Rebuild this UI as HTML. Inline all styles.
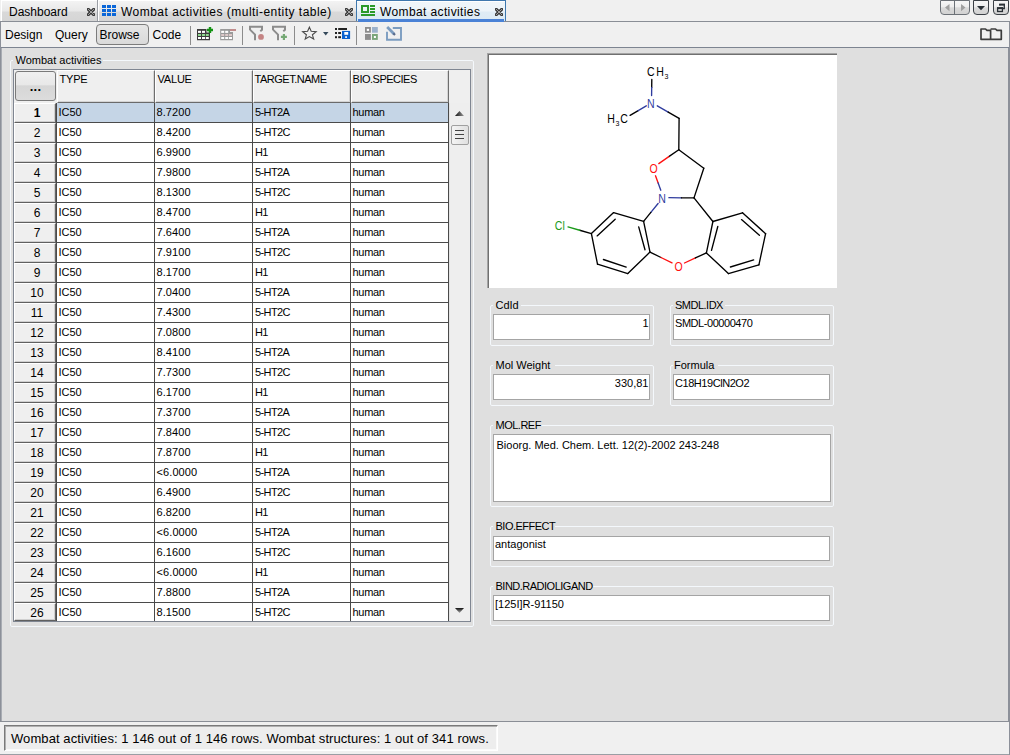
<!DOCTYPE html>
<html><head><meta charset="utf-8"><style>
*{margin:0;padding:0;box-sizing:border-box}
html,body{width:1010px;height:755px;overflow:hidden;background:#dfdfdf;font-family:"Liberation Sans",sans-serif;color:#000}
.a{position:absolute}
.t{position:absolute;white-space:pre;line-height:1}
</style></head>
<body>
<div class="a" style="left:0px;top:0px;width:1010px;height:21px;background:#f0f0f0"></div>
<div class="a" style="left:0px;top:21px;width:1010px;height:1px;background:#8a8e96"></div>
<div class="a" style="left:1px;top:0px;width:96px;height:21px;background:linear-gradient(#f3f3f3 0,#e8e8e8 50%,#d9d9d9 55%,#d5d5d5 100%);border-left:1px solid #fff;border-top:1px solid #fff"></div>
<div class="a" style="left:97px;top:0px;width:1px;height:21px;background:#9a9ea4"></div>
<div class="t" style="left:9px;top:6.34px;font-size:12px;">Dashboard</div>
<svg class="a" style="left:87px;top:8px" width="8" height="8" viewBox="0 0 8 8"><path d="M1.3 1.3L6.7 6.7M6.7 1.3L1.3 6.7" stroke="#3a3a3a" stroke-width="3.1" stroke-linecap="round"/><path d="M1.3 1.3L6.7 6.7M6.7 1.3L1.3 6.7" stroke="#d0d0d0" stroke-width="0.7" stroke-linecap="round"/></svg>
<div class="a" style="left:98px;top:0px;width:258px;height:21px;background:linear-gradient(#f3f3f3 0,#e8e8e8 50%,#d9d9d9 55%,#d5d5d5 100%);border-left:1px solid #fff;border-top:1px solid #fff"></div>
<div class="a" style="left:102px;top:5px;width:4px;height:3px;background:#0a66d8"></div>
<div class="a" style="left:107px;top:5px;width:4px;height:3px;background:#0a66d8"></div>
<div class="a" style="left:112px;top:5px;width:4px;height:3px;background:#0a66d8"></div>
<div class="a" style="left:102px;top:9px;width:4px;height:3px;background:#0a66d8"></div>
<div class="a" style="left:107px;top:9px;width:4px;height:3px;background:#0a66d8"></div>
<div class="a" style="left:112px;top:9px;width:4px;height:3px;background:#0a66d8"></div>
<div class="a" style="left:102px;top:13px;width:4px;height:3px;background:#0a66d8"></div>
<div class="a" style="left:107px;top:13px;width:4px;height:3px;background:#0a66d8"></div>
<div class="a" style="left:112px;top:13px;width:4px;height:3px;background:#0a66d8"></div>
<div class="t" style="left:121px;top:6.34px;font-size:12px;letter-spacing:0.48px">Wombat activities (multi-entity table)</div>
<svg class="a" style="left:345px;top:8px" width="8" height="8" viewBox="0 0 8 8"><path d="M1.3 1.3L6.7 6.7M6.7 1.3L1.3 6.7" stroke="#3a3a3a" stroke-width="3.1" stroke-linecap="round"/><path d="M1.3 1.3L6.7 6.7M6.7 1.3L1.3 6.7" stroke="#d0d0d0" stroke-width="0.7" stroke-linecap="round"/></svg>
<div class="a" style="left:356px;top:0px;width:150px;height:21px;background:linear-gradient(#f0f6fa 0,#edf4f9 50%,#dfecf5 55%,#dceaf4 100%);border:1px solid #3f78ae;border-bottom:none"></div>
<div class="a" style="left:357px;top:1px;width:148px;height:1px;background:#fff"></div>
<div class="a" style="left:358px;top:19px;width:146px;height:3px;background:#4a82d6"></div>
<div class="a" style="left:361px;top:5px;width:8px;height:8px;border:2px solid #2a9a2a"></div>
<div class="a" style="left:370px;top:5px;width:5px;height:2px;background:#2a9a2a"></div>
<div class="a" style="left:370px;top:8px;width:5px;height:2px;background:#2a9a2a"></div>
<div class="a" style="left:370px;top:11px;width:5px;height:2px;background:#2a9a2a"></div>
<div class="a" style="left:361px;top:14px;width:14px;height:2px;background:#2a9a2a"></div>
<div class="t" style="left:380px;top:6.34px;font-size:12px;letter-spacing:0.38px">Wombat activities</div>
<svg class="a" style="left:495px;top:8px" width="8" height="8" viewBox="0 0 8 8"><path d="M1.3 1.3L6.7 6.7M6.7 1.3L1.3 6.7" stroke="#3a3a3a" stroke-width="3.1" stroke-linecap="round"/><path d="M1.3 1.3L6.7 6.7M6.7 1.3L1.3 6.7" stroke="#d0d0d0" stroke-width="0.7" stroke-linecap="round"/></svg>
<div class="a" style="left:940px;top:0px;width:30px;height:15px;background:linear-gradient(#f6f6f6 0,#eeeeee 45%,#dadada 52%,#d2d2d2 100%);border:1px solid #6c7177;border-radius:0 0 4px 4px"></div>
<div class="a" style="left:954px;top:1px;width:1px;height:13px;background:#6c7177"></div>
<svg class="a" style="left:944px;top:4px" width="22" height="8"><path d="M5.5 0L1 3.6L5.5 7.2Z M17 0L21.5 3.6L17 7.2Z" fill="#a0a0a0"/></svg>
<div class="a" style="left:973px;top:0px;width:16px;height:15px;background:linear-gradient(#f6f6f6 0,#eeeeee 45%,#dadada 52%,#d2d2d2 100%);border:1px solid #3a3f45;border-radius:0 0 4px 4px"></div>
<svg class="a" style="left:977px;top:6px" width="9" height="5"><path d="M0 0L8 0L4 4.2Z" fill="#2a3036"/></svg>
<div class="a" style="left:993px;top:0px;width:16px;height:15px;background:linear-gradient(#f6f6f6 0,#eeeeee 45%,#dadada 52%,#d2d2d2 100%);border:1px solid #3a3f45;border-radius:0 0 4px 4px"></div>
<svg class="a" style="left:996px;top:3px" width="10" height="10" viewBox="996 3 10 10"><path d="M999.8 5.5V4.5H1004.3V8.5H1002.6" fill="none" stroke="#2a3036" stroke-width="1.3"/><rect x="999.2" y="3.8" width="5.8" height="1.7" fill="#2a3036"/><rect x="997.6" y="7.9" width="4.8" height="3.6" fill="none" stroke="#2a3036" stroke-width="1.3"/><rect x="997" y="7.3" width="6" height="1.8" fill="#2a3036"/></svg>
<div class="a" style="left:0px;top:22px;width:1010px;height:25px;background:#f0f0f0"></div>
<div class="a" style="left:0px;top:47px;width:1010px;height:1px;background:#7d8491"></div>
<div class="t" style="left:5px;top:28.54px;font-size:12px;">Design</div>
<div class="t" style="left:55px;top:28.54px;font-size:12px;">Query</div>
<div class="a" style="left:96px;top:24px;width:53px;height:21px;background:linear-gradient(#e6e6e6,#e0e0e0 50%,#dadada 100%);border:1px solid #7c7c7c;border-radius:4px"></div>
<div class="t" style="left:99.5px;top:28.54px;font-size:12px;">Browse</div>
<div class="t" style="left:152.5px;top:28.54px;font-size:12px;">Code</div>
<div class="a" style="left:190px;top:26px;width:1px;height:19px;background:#8c8c8c"></div>
<div class="a" style="left:242px;top:26px;width:1px;height:19px;background:#8c8c8c"></div>
<div class="a" style="left:294px;top:26px;width:1px;height:19px;background:#8c8c8c"></div>
<div class="a" style="left:356px;top:26px;width:1px;height:19px;background:#8c8c8c"></div>
<svg class="a" style="left:196px;top:26px" width="18" height="15" viewBox="196 26 18 15"><path d="M197 29H206.5V32.5H210V40.2H197Z" fill="#3c3c3c"/><rect x="198" y="30.8" width="3" height="2.1" fill="#fff"/><rect x="202" y="30.8" width="3" height="2.1" fill="#fff"/><rect x="198" y="34" width="3" height="2" fill="#8ed88e"/><rect x="202" y="34" width="3" height="2" fill="#8ed88e"/><rect x="205.8" y="34" width="3" height="2" fill="#8ed88e"/><rect x="198" y="37" width="3" height="2" fill="#fff"/><rect x="202" y="37" width="3" height="2" fill="#fff"/><rect x="205.8" y="37" width="3" height="2" fill="#fff"/><path d="M210 27V33M207 30H213" stroke="#139313" stroke-width="2.4"/></svg>
<svg class="a" style="left:219px;top:26px" width="18" height="15" viewBox="219 26 18 15"><path d="M220.2 29H230V32H233V40.2H220.2Z" fill="#9a9a9a"/><rect x="221.2" y="30.8" width="3" height="2.1" fill="#fff"/><rect x="225.2" y="30.8" width="3" height="2.1" fill="#fff"/><rect x="221.2" y="34" width="3" height="2" fill="#dcc8c8"/><rect x="225.2" y="34" width="3" height="2" fill="#dcc8c8"/><rect x="229" y="34" width="3" height="2" fill="#dcc8c8"/><rect x="221.2" y="37" width="3" height="2" fill="#fff"/><rect x="225.2" y="37" width="3" height="2" fill="#fff"/><rect x="229" y="37" width="3" height="2" fill="#fff"/><rect x="230" y="29" width="6" height="2" fill="#c08c8c"/></svg>
<svg class="a" style="left:248px;top:25px" width="40" height="16"><g fill="none" stroke="#8c8c8c" stroke-width="2"><path d="M2 5V1.8H14V4.8L12.3 6.2M2 4.6L7 9.6V15.2"/><path transform="translate(23,0)" d="M2 5V1.8H14V4.8L12.3 6.2M2 4.6L7 9.6V15.2"/></g><circle cx="13" cy="11.9" r="2.9" fill="#c48484"/><path d="M35.9 9V15M32.9 11.9H38.9" stroke="#74a874" stroke-width="2.2"/></svg>
<svg class="a" style="left:300px;top:25px" width="18" height="16" viewBox="300 25 18 16"><path d="M309.4 27.2L311.2 31.2L316.2 31.6L312.4 34.8L313.7 39L309.4 36.6L305.2 39L306.4 34.8L302.6 31.6L307.6 31.2Z" fill="none" stroke="#4a4a4a" stroke-width="1.1" stroke-linejoin="miter"/></svg>
<svg class="a" style="left:323px;top:32px" width="6" height="4"><path d="M0 0H5.5L2.75 3.6Z" fill="#34495a"/></svg>
<svg class="a" style="left:334px;top:27px" width="18" height="13" viewBox="334 27 18 13"><rect x="335" y="28" width="2" height="2" fill="#222"/><rect x="338.2" y="28" width="8.8" height="2" fill="#222"/><rect x="335" y="32" width="2" height="2" fill="#222"/><rect x="338.2" y="32" width="2.8" height="2" fill="#222"/><rect x="335" y="36.2" width="2" height="2" fill="#222"/><rect x="338.2" y="36.2" width="2.8" height="2" fill="#222"/><rect x="342" y="30.9" width="8.1" height="8.1" fill="#0a62d0"/><rect x="344.3" y="32" width="3.9" height="2.8" fill="#fff"/><rect x="345.1" y="36.3" width="1.9" height="1.6" fill="#fff"/></svg>
<svg class="a" style="left:364px;top:26px" width="15" height="15" viewBox="364 26 15 15"><rect x="365.9" y="27.9" width="4.1" height="3.9" fill="#fff" stroke="#8c8c8c" stroke-width="1.8"/><rect x="372" y="27" width="5.8" height="5.7" fill="#9cb2cc"/><rect x="365" y="34" width="5.9" height="5.9" fill="#8e8e8e"/><rect x="372" y="34" width="5.8" height="5.9" fill="#7aa67a"/><rect x="373.9" y="36" width="2" height="2" fill="#fff"/></svg>
<svg class="a" style="left:385px;top:25px" width="18" height="17" viewBox="385 25 18 17"><path d="M392.8 28H401V39.7H387V31.7" fill="none" stroke="#7b9cc0" stroke-width="1.9"/><path d="M387.2 27L394.3 34.2" stroke="#7b9cc0" stroke-width="2.8"/><path d="M393.3 33.2L395 35" stroke="#5a6a8a" stroke-width="2"/></svg>
<svg class="a" style="left:978px;top:26px" width="26" height="16" viewBox="978 26 26 16"><path d="M981 29H985.5L987 30.4H990.6V39.3H981Z M990.6 29H995.5L997 30.4H1001.3V39.3H990.6" fill="none" stroke="#3c3c3c" stroke-width="1.7" stroke-linejoin="round"/></svg>
<div class="a" style="left:0px;top:22px;width:1px;height:700px;background:#8c9099"></div>
<div class="a" style="left:1px;top:48px;width:1px;height:674px;background:#a8acb3"></div>
<div class="a" style="left:1009px;top:22px;width:1px;height:733px;background:#8c9099"></div>
<div class="a" style="left:1008px;top:48px;width:1px;height:674px;background:#8c9099"></div>
<div class="a" style="left:0px;top:721px;width:1010px;height:1px;background:#8a8e96"></div>
<div class="a" style="left:0px;top:722px;width:1010px;height:33px;background:#f0f0f0"></div>
<div class="a" style="left:0px;top:754px;width:1010px;height:1px;background:#9a9ea4"></div>
<div class="a" style="left:1009px;top:722px;width:1px;height:33px;background:#8c9099"></div>
<div class="a" style="left:4px;top:725px;width:494px;height:26px;border-top:1px solid #7a7a7a;border-left:1px solid #7a7a7a;border-bottom:1px solid #fff;border-right:1px solid #fff;background:#ededed;box-shadow:inset 1px 1px 0 #b0b0b0,inset -1px -1px 0 #fafafa"></div>
<div class="t" style="left:11px;top:731.80px;font-size:13px;letter-spacing:0.08px">Wombat activities: 1 146 out of 1 146 rows. Wombat structures: 1 out of 341 rows.</div>
<div class="a" style="left:10px;top:60px;width:464px;height:567px;border:1px solid #f4f8fc;border-radius:2px"></div>
<div class="a" style="left:13px;top:57px;width:90px;height:8px;background:#dfdfdf"></div>
<div class="t" style="left:15.5px;top:54.69px;font-size:11px;">Wombat activities</div>
<div class="a" style="left:13px;top:69px;width:458px;height:553px;background:#fff;border:1px solid #7f8692"></div>
<div class="a" style="left:14px;top:70px;width:456px;height:33px;background:#efefef"></div>
<div class="a" style="left:15px;top:71px;width:41px;height:30px;background:linear-gradient(#f0f0f0 0,#e8e8e8 45%,#d6d6d6 50%,#dcdcdc 100%);border:1px solid #7a7a7a;border-radius:3px"></div>
<div class="t" style="left:-14.5px;width:100px;text-align:center;top:79.50px;font-size:13px;font-weight:bold;letter-spacing:0.3px">...</div>
<div class="a" style="left:57px;top:70px;width:98px;height:33px;background:#efefef;border-left:1px solid #fff;border-top:1px solid #fff;border-right:1px solid #6e6e6e;border-bottom:1px solid #6a6a6a;box-shadow:inset -1px -1px 0 #d4d4d4"></div>
<div class="t" style="left:59.5px;top:74.19px;font-size:11px;letter-spacing:-0.2px">TYPE</div>
<div class="a" style="left:155px;top:70px;width:98px;height:33px;background:#efefef;border-left:1px solid #fff;border-top:1px solid #fff;border-right:1px solid #6e6e6e;border-bottom:1px solid #6a6a6a;box-shadow:inset -1px -1px 0 #d4d4d4"></div>
<div class="t" style="left:157.5px;top:74.19px;font-size:11px;letter-spacing:-0.2px">VALUE</div>
<div class="a" style="left:253px;top:70px;width:98px;height:33px;background:#efefef;border-left:1px solid #fff;border-top:1px solid #fff;border-right:1px solid #6e6e6e;border-bottom:1px solid #6a6a6a;box-shadow:inset -1px -1px 0 #d4d4d4"></div>
<div class="t" style="left:254.6px;top:74.19px;font-size:11px;letter-spacing:-0.5px">TARGET.NAME</div>
<div class="a" style="left:351px;top:70px;width:98px;height:33px;background:#efefef;border-left:1px solid #fff;border-top:1px solid #fff;border-right:1px solid #6e6e6e;border-bottom:1px solid #6a6a6a;box-shadow:inset -1px -1px 0 #d4d4d4"></div>
<div class="t" style="left:352.6px;top:74.19px;font-size:11px;letter-spacing:-0.5px">BIO.SPECIES</div>
<div class="a" style="left:14px;top:103px;width:42px;height:20px;background:#efefef;border-left:1px solid #fff;border-top:1px solid #fff;border-right:1px solid #666;border-bottom:1px solid #606060;box-shadow:inset -1px -1px 0 #cfcfcf"></div>
<div class="t" style="left:-13px;width:100px;text-align:center;top:106.64px;font-size:12px;font-weight:bold">1</div>
<div class="a" style="left:56px;top:103px;width:392px;height:20px;background:#c5d5e6"></div>
<div class="a" style="left:56px;top:122px;width:392px;height:1px;background:#4a4a4a"></div>
<div class="a" style="left:56px;top:103px;width:1px;height:20px;background:#4a4a4a"></div>
<div class="a" style="left:154px;top:103px;width:1px;height:20px;background:#4a4a4a"></div>
<div class="a" style="left:252px;top:103px;width:1px;height:20px;background:#4a4a4a"></div>
<div class="a" style="left:350px;top:103px;width:1px;height:20px;background:#4a4a4a"></div>
<div class="a" style="left:448px;top:103px;width:1px;height:20px;background:#4a4a4a"></div>
<div class="t" style="left:58.5px;top:106.69px;font-size:11px;">IC50</div>
<div class="t" style="left:156.5px;top:106.69px;font-size:11px;letter-spacing:0.1px">8.7200</div>
<div class="t" style="left:255px;top:106.69px;font-size:11px;letter-spacing:-0.6px">5-HT2A</div>
<div class="t" style="left:352.5px;top:106.69px;font-size:11px;letter-spacing:-0.3px">human</div>
<div class="a" style="left:14px;top:123px;width:42px;height:20px;background:#efefef;border-left:1px solid #fff;border-top:1px solid #fff;border-right:1px solid #666;border-bottom:1px solid #606060;box-shadow:inset -1px -1px 0 #cfcfcf"></div>
<div class="t" style="left:-13px;width:100px;text-align:center;top:126.64px;font-size:12px;">2</div>
<div class="a" style="left:56px;top:123px;width:392px;height:20px;background:#fff"></div>
<div class="a" style="left:56px;top:142px;width:392px;height:1px;background:#4a4a4a"></div>
<div class="a" style="left:56px;top:123px;width:1px;height:20px;background:#4a4a4a"></div>
<div class="a" style="left:154px;top:123px;width:1px;height:20px;background:#4a4a4a"></div>
<div class="a" style="left:252px;top:123px;width:1px;height:20px;background:#4a4a4a"></div>
<div class="a" style="left:350px;top:123px;width:1px;height:20px;background:#4a4a4a"></div>
<div class="a" style="left:448px;top:123px;width:1px;height:20px;background:#4a4a4a"></div>
<div class="t" style="left:58.5px;top:126.69px;font-size:11px;">IC50</div>
<div class="t" style="left:156.5px;top:126.69px;font-size:11px;letter-spacing:0.1px">8.4200</div>
<div class="t" style="left:255px;top:126.69px;font-size:11px;letter-spacing:-0.6px">5-HT2C</div>
<div class="t" style="left:352.5px;top:126.69px;font-size:11px;letter-spacing:-0.3px">human</div>
<div class="a" style="left:14px;top:143px;width:42px;height:20px;background:#efefef;border-left:1px solid #fff;border-top:1px solid #fff;border-right:1px solid #666;border-bottom:1px solid #606060;box-shadow:inset -1px -1px 0 #cfcfcf"></div>
<div class="t" style="left:-13px;width:100px;text-align:center;top:146.64px;font-size:12px;">3</div>
<div class="a" style="left:56px;top:143px;width:392px;height:20px;background:#fff"></div>
<div class="a" style="left:56px;top:162px;width:392px;height:1px;background:#4a4a4a"></div>
<div class="a" style="left:56px;top:143px;width:1px;height:20px;background:#4a4a4a"></div>
<div class="a" style="left:154px;top:143px;width:1px;height:20px;background:#4a4a4a"></div>
<div class="a" style="left:252px;top:143px;width:1px;height:20px;background:#4a4a4a"></div>
<div class="a" style="left:350px;top:143px;width:1px;height:20px;background:#4a4a4a"></div>
<div class="a" style="left:448px;top:143px;width:1px;height:20px;background:#4a4a4a"></div>
<div class="t" style="left:58.5px;top:146.69px;font-size:11px;">IC50</div>
<div class="t" style="left:156.5px;top:146.69px;font-size:11px;letter-spacing:0.1px">6.9900</div>
<div class="t" style="left:255px;top:146.69px;font-size:11px;letter-spacing:-0.6px">H1</div>
<div class="t" style="left:352.5px;top:146.69px;font-size:11px;letter-spacing:-0.3px">human</div>
<div class="a" style="left:14px;top:163px;width:42px;height:20px;background:#efefef;border-left:1px solid #fff;border-top:1px solid #fff;border-right:1px solid #666;border-bottom:1px solid #606060;box-shadow:inset -1px -1px 0 #cfcfcf"></div>
<div class="t" style="left:-13px;width:100px;text-align:center;top:166.64px;font-size:12px;">4</div>
<div class="a" style="left:56px;top:163px;width:392px;height:20px;background:#fff"></div>
<div class="a" style="left:56px;top:182px;width:392px;height:1px;background:#4a4a4a"></div>
<div class="a" style="left:56px;top:163px;width:1px;height:20px;background:#4a4a4a"></div>
<div class="a" style="left:154px;top:163px;width:1px;height:20px;background:#4a4a4a"></div>
<div class="a" style="left:252px;top:163px;width:1px;height:20px;background:#4a4a4a"></div>
<div class="a" style="left:350px;top:163px;width:1px;height:20px;background:#4a4a4a"></div>
<div class="a" style="left:448px;top:163px;width:1px;height:20px;background:#4a4a4a"></div>
<div class="t" style="left:58.5px;top:166.69px;font-size:11px;">IC50</div>
<div class="t" style="left:156.5px;top:166.69px;font-size:11px;letter-spacing:0.1px">7.9800</div>
<div class="t" style="left:255px;top:166.69px;font-size:11px;letter-spacing:-0.6px">5-HT2A</div>
<div class="t" style="left:352.5px;top:166.69px;font-size:11px;letter-spacing:-0.3px">human</div>
<div class="a" style="left:14px;top:183px;width:42px;height:20px;background:#efefef;border-left:1px solid #fff;border-top:1px solid #fff;border-right:1px solid #666;border-bottom:1px solid #606060;box-shadow:inset -1px -1px 0 #cfcfcf"></div>
<div class="t" style="left:-13px;width:100px;text-align:center;top:186.64px;font-size:12px;">5</div>
<div class="a" style="left:56px;top:183px;width:392px;height:20px;background:#fff"></div>
<div class="a" style="left:56px;top:202px;width:392px;height:1px;background:#4a4a4a"></div>
<div class="a" style="left:56px;top:183px;width:1px;height:20px;background:#4a4a4a"></div>
<div class="a" style="left:154px;top:183px;width:1px;height:20px;background:#4a4a4a"></div>
<div class="a" style="left:252px;top:183px;width:1px;height:20px;background:#4a4a4a"></div>
<div class="a" style="left:350px;top:183px;width:1px;height:20px;background:#4a4a4a"></div>
<div class="a" style="left:448px;top:183px;width:1px;height:20px;background:#4a4a4a"></div>
<div class="t" style="left:58.5px;top:186.69px;font-size:11px;">IC50</div>
<div class="t" style="left:156.5px;top:186.69px;font-size:11px;letter-spacing:0.1px">8.1300</div>
<div class="t" style="left:255px;top:186.69px;font-size:11px;letter-spacing:-0.6px">5-HT2C</div>
<div class="t" style="left:352.5px;top:186.69px;font-size:11px;letter-spacing:-0.3px">human</div>
<div class="a" style="left:14px;top:203px;width:42px;height:20px;background:#efefef;border-left:1px solid #fff;border-top:1px solid #fff;border-right:1px solid #666;border-bottom:1px solid #606060;box-shadow:inset -1px -1px 0 #cfcfcf"></div>
<div class="t" style="left:-13px;width:100px;text-align:center;top:206.64px;font-size:12px;">6</div>
<div class="a" style="left:56px;top:203px;width:392px;height:20px;background:#fff"></div>
<div class="a" style="left:56px;top:222px;width:392px;height:1px;background:#4a4a4a"></div>
<div class="a" style="left:56px;top:203px;width:1px;height:20px;background:#4a4a4a"></div>
<div class="a" style="left:154px;top:203px;width:1px;height:20px;background:#4a4a4a"></div>
<div class="a" style="left:252px;top:203px;width:1px;height:20px;background:#4a4a4a"></div>
<div class="a" style="left:350px;top:203px;width:1px;height:20px;background:#4a4a4a"></div>
<div class="a" style="left:448px;top:203px;width:1px;height:20px;background:#4a4a4a"></div>
<div class="t" style="left:58.5px;top:206.69px;font-size:11px;">IC50</div>
<div class="t" style="left:156.5px;top:206.69px;font-size:11px;letter-spacing:0.1px">8.4700</div>
<div class="t" style="left:255px;top:206.69px;font-size:11px;letter-spacing:-0.6px">H1</div>
<div class="t" style="left:352.5px;top:206.69px;font-size:11px;letter-spacing:-0.3px">human</div>
<div class="a" style="left:14px;top:223px;width:42px;height:20px;background:#efefef;border-left:1px solid #fff;border-top:1px solid #fff;border-right:1px solid #666;border-bottom:1px solid #606060;box-shadow:inset -1px -1px 0 #cfcfcf"></div>
<div class="t" style="left:-13px;width:100px;text-align:center;top:226.64px;font-size:12px;">7</div>
<div class="a" style="left:56px;top:223px;width:392px;height:20px;background:#fff"></div>
<div class="a" style="left:56px;top:242px;width:392px;height:1px;background:#4a4a4a"></div>
<div class="a" style="left:56px;top:223px;width:1px;height:20px;background:#4a4a4a"></div>
<div class="a" style="left:154px;top:223px;width:1px;height:20px;background:#4a4a4a"></div>
<div class="a" style="left:252px;top:223px;width:1px;height:20px;background:#4a4a4a"></div>
<div class="a" style="left:350px;top:223px;width:1px;height:20px;background:#4a4a4a"></div>
<div class="a" style="left:448px;top:223px;width:1px;height:20px;background:#4a4a4a"></div>
<div class="t" style="left:58.5px;top:226.69px;font-size:11px;">IC50</div>
<div class="t" style="left:156.5px;top:226.69px;font-size:11px;letter-spacing:0.1px">7.6400</div>
<div class="t" style="left:255px;top:226.69px;font-size:11px;letter-spacing:-0.6px">5-HT2A</div>
<div class="t" style="left:352.5px;top:226.69px;font-size:11px;letter-spacing:-0.3px">human</div>
<div class="a" style="left:14px;top:243px;width:42px;height:20px;background:#efefef;border-left:1px solid #fff;border-top:1px solid #fff;border-right:1px solid #666;border-bottom:1px solid #606060;box-shadow:inset -1px -1px 0 #cfcfcf"></div>
<div class="t" style="left:-13px;width:100px;text-align:center;top:246.64px;font-size:12px;">8</div>
<div class="a" style="left:56px;top:243px;width:392px;height:20px;background:#fff"></div>
<div class="a" style="left:56px;top:262px;width:392px;height:1px;background:#4a4a4a"></div>
<div class="a" style="left:56px;top:243px;width:1px;height:20px;background:#4a4a4a"></div>
<div class="a" style="left:154px;top:243px;width:1px;height:20px;background:#4a4a4a"></div>
<div class="a" style="left:252px;top:243px;width:1px;height:20px;background:#4a4a4a"></div>
<div class="a" style="left:350px;top:243px;width:1px;height:20px;background:#4a4a4a"></div>
<div class="a" style="left:448px;top:243px;width:1px;height:20px;background:#4a4a4a"></div>
<div class="t" style="left:58.5px;top:246.69px;font-size:11px;">IC50</div>
<div class="t" style="left:156.5px;top:246.69px;font-size:11px;letter-spacing:0.1px">7.9100</div>
<div class="t" style="left:255px;top:246.69px;font-size:11px;letter-spacing:-0.6px">5-HT2C</div>
<div class="t" style="left:352.5px;top:246.69px;font-size:11px;letter-spacing:-0.3px">human</div>
<div class="a" style="left:14px;top:263px;width:42px;height:20px;background:#efefef;border-left:1px solid #fff;border-top:1px solid #fff;border-right:1px solid #666;border-bottom:1px solid #606060;box-shadow:inset -1px -1px 0 #cfcfcf"></div>
<div class="t" style="left:-13px;width:100px;text-align:center;top:266.64px;font-size:12px;">9</div>
<div class="a" style="left:56px;top:263px;width:392px;height:20px;background:#fff"></div>
<div class="a" style="left:56px;top:282px;width:392px;height:1px;background:#4a4a4a"></div>
<div class="a" style="left:56px;top:263px;width:1px;height:20px;background:#4a4a4a"></div>
<div class="a" style="left:154px;top:263px;width:1px;height:20px;background:#4a4a4a"></div>
<div class="a" style="left:252px;top:263px;width:1px;height:20px;background:#4a4a4a"></div>
<div class="a" style="left:350px;top:263px;width:1px;height:20px;background:#4a4a4a"></div>
<div class="a" style="left:448px;top:263px;width:1px;height:20px;background:#4a4a4a"></div>
<div class="t" style="left:58.5px;top:266.69px;font-size:11px;">IC50</div>
<div class="t" style="left:156.5px;top:266.69px;font-size:11px;letter-spacing:0.1px">8.1700</div>
<div class="t" style="left:255px;top:266.69px;font-size:11px;letter-spacing:-0.6px">H1</div>
<div class="t" style="left:352.5px;top:266.69px;font-size:11px;letter-spacing:-0.3px">human</div>
<div class="a" style="left:14px;top:283px;width:42px;height:20px;background:#efefef;border-left:1px solid #fff;border-top:1px solid #fff;border-right:1px solid #666;border-bottom:1px solid #606060;box-shadow:inset -1px -1px 0 #cfcfcf"></div>
<div class="t" style="left:-13px;width:100px;text-align:center;top:286.64px;font-size:12px;">10</div>
<div class="a" style="left:56px;top:283px;width:392px;height:20px;background:#fff"></div>
<div class="a" style="left:56px;top:302px;width:392px;height:1px;background:#4a4a4a"></div>
<div class="a" style="left:56px;top:283px;width:1px;height:20px;background:#4a4a4a"></div>
<div class="a" style="left:154px;top:283px;width:1px;height:20px;background:#4a4a4a"></div>
<div class="a" style="left:252px;top:283px;width:1px;height:20px;background:#4a4a4a"></div>
<div class="a" style="left:350px;top:283px;width:1px;height:20px;background:#4a4a4a"></div>
<div class="a" style="left:448px;top:283px;width:1px;height:20px;background:#4a4a4a"></div>
<div class="t" style="left:58.5px;top:286.69px;font-size:11px;">IC50</div>
<div class="t" style="left:156.5px;top:286.69px;font-size:11px;letter-spacing:0.1px">7.0400</div>
<div class="t" style="left:255px;top:286.69px;font-size:11px;letter-spacing:-0.6px">5-HT2A</div>
<div class="t" style="left:352.5px;top:286.69px;font-size:11px;letter-spacing:-0.3px">human</div>
<div class="a" style="left:14px;top:303px;width:42px;height:20px;background:#efefef;border-left:1px solid #fff;border-top:1px solid #fff;border-right:1px solid #666;border-bottom:1px solid #606060;box-shadow:inset -1px -1px 0 #cfcfcf"></div>
<div class="t" style="left:-13px;width:100px;text-align:center;top:306.64px;font-size:12px;">11</div>
<div class="a" style="left:56px;top:303px;width:392px;height:20px;background:#fff"></div>
<div class="a" style="left:56px;top:322px;width:392px;height:1px;background:#4a4a4a"></div>
<div class="a" style="left:56px;top:303px;width:1px;height:20px;background:#4a4a4a"></div>
<div class="a" style="left:154px;top:303px;width:1px;height:20px;background:#4a4a4a"></div>
<div class="a" style="left:252px;top:303px;width:1px;height:20px;background:#4a4a4a"></div>
<div class="a" style="left:350px;top:303px;width:1px;height:20px;background:#4a4a4a"></div>
<div class="a" style="left:448px;top:303px;width:1px;height:20px;background:#4a4a4a"></div>
<div class="t" style="left:58.5px;top:306.69px;font-size:11px;">IC50</div>
<div class="t" style="left:156.5px;top:306.69px;font-size:11px;letter-spacing:0.1px">7.4300</div>
<div class="t" style="left:255px;top:306.69px;font-size:11px;letter-spacing:-0.6px">5-HT2C</div>
<div class="t" style="left:352.5px;top:306.69px;font-size:11px;letter-spacing:-0.3px">human</div>
<div class="a" style="left:14px;top:323px;width:42px;height:20px;background:#efefef;border-left:1px solid #fff;border-top:1px solid #fff;border-right:1px solid #666;border-bottom:1px solid #606060;box-shadow:inset -1px -1px 0 #cfcfcf"></div>
<div class="t" style="left:-13px;width:100px;text-align:center;top:326.64px;font-size:12px;">12</div>
<div class="a" style="left:56px;top:323px;width:392px;height:20px;background:#fff"></div>
<div class="a" style="left:56px;top:342px;width:392px;height:1px;background:#4a4a4a"></div>
<div class="a" style="left:56px;top:323px;width:1px;height:20px;background:#4a4a4a"></div>
<div class="a" style="left:154px;top:323px;width:1px;height:20px;background:#4a4a4a"></div>
<div class="a" style="left:252px;top:323px;width:1px;height:20px;background:#4a4a4a"></div>
<div class="a" style="left:350px;top:323px;width:1px;height:20px;background:#4a4a4a"></div>
<div class="a" style="left:448px;top:323px;width:1px;height:20px;background:#4a4a4a"></div>
<div class="t" style="left:58.5px;top:326.69px;font-size:11px;">IC50</div>
<div class="t" style="left:156.5px;top:326.69px;font-size:11px;letter-spacing:0.1px">7.0800</div>
<div class="t" style="left:255px;top:326.69px;font-size:11px;letter-spacing:-0.6px">H1</div>
<div class="t" style="left:352.5px;top:326.69px;font-size:11px;letter-spacing:-0.3px">human</div>
<div class="a" style="left:14px;top:343px;width:42px;height:20px;background:#efefef;border-left:1px solid #fff;border-top:1px solid #fff;border-right:1px solid #666;border-bottom:1px solid #606060;box-shadow:inset -1px -1px 0 #cfcfcf"></div>
<div class="t" style="left:-13px;width:100px;text-align:center;top:346.64px;font-size:12px;">13</div>
<div class="a" style="left:56px;top:343px;width:392px;height:20px;background:#fff"></div>
<div class="a" style="left:56px;top:362px;width:392px;height:1px;background:#4a4a4a"></div>
<div class="a" style="left:56px;top:343px;width:1px;height:20px;background:#4a4a4a"></div>
<div class="a" style="left:154px;top:343px;width:1px;height:20px;background:#4a4a4a"></div>
<div class="a" style="left:252px;top:343px;width:1px;height:20px;background:#4a4a4a"></div>
<div class="a" style="left:350px;top:343px;width:1px;height:20px;background:#4a4a4a"></div>
<div class="a" style="left:448px;top:343px;width:1px;height:20px;background:#4a4a4a"></div>
<div class="t" style="left:58.5px;top:346.69px;font-size:11px;">IC50</div>
<div class="t" style="left:156.5px;top:346.69px;font-size:11px;letter-spacing:0.1px">8.4100</div>
<div class="t" style="left:255px;top:346.69px;font-size:11px;letter-spacing:-0.6px">5-HT2A</div>
<div class="t" style="left:352.5px;top:346.69px;font-size:11px;letter-spacing:-0.3px">human</div>
<div class="a" style="left:14px;top:363px;width:42px;height:20px;background:#efefef;border-left:1px solid #fff;border-top:1px solid #fff;border-right:1px solid #666;border-bottom:1px solid #606060;box-shadow:inset -1px -1px 0 #cfcfcf"></div>
<div class="t" style="left:-13px;width:100px;text-align:center;top:366.64px;font-size:12px;">14</div>
<div class="a" style="left:56px;top:363px;width:392px;height:20px;background:#fff"></div>
<div class="a" style="left:56px;top:382px;width:392px;height:1px;background:#4a4a4a"></div>
<div class="a" style="left:56px;top:363px;width:1px;height:20px;background:#4a4a4a"></div>
<div class="a" style="left:154px;top:363px;width:1px;height:20px;background:#4a4a4a"></div>
<div class="a" style="left:252px;top:363px;width:1px;height:20px;background:#4a4a4a"></div>
<div class="a" style="left:350px;top:363px;width:1px;height:20px;background:#4a4a4a"></div>
<div class="a" style="left:448px;top:363px;width:1px;height:20px;background:#4a4a4a"></div>
<div class="t" style="left:58.5px;top:366.69px;font-size:11px;">IC50</div>
<div class="t" style="left:156.5px;top:366.69px;font-size:11px;letter-spacing:0.1px">7.7300</div>
<div class="t" style="left:255px;top:366.69px;font-size:11px;letter-spacing:-0.6px">5-HT2C</div>
<div class="t" style="left:352.5px;top:366.69px;font-size:11px;letter-spacing:-0.3px">human</div>
<div class="a" style="left:14px;top:383px;width:42px;height:20px;background:#efefef;border-left:1px solid #fff;border-top:1px solid #fff;border-right:1px solid #666;border-bottom:1px solid #606060;box-shadow:inset -1px -1px 0 #cfcfcf"></div>
<div class="t" style="left:-13px;width:100px;text-align:center;top:386.64px;font-size:12px;">15</div>
<div class="a" style="left:56px;top:383px;width:392px;height:20px;background:#fff"></div>
<div class="a" style="left:56px;top:402px;width:392px;height:1px;background:#4a4a4a"></div>
<div class="a" style="left:56px;top:383px;width:1px;height:20px;background:#4a4a4a"></div>
<div class="a" style="left:154px;top:383px;width:1px;height:20px;background:#4a4a4a"></div>
<div class="a" style="left:252px;top:383px;width:1px;height:20px;background:#4a4a4a"></div>
<div class="a" style="left:350px;top:383px;width:1px;height:20px;background:#4a4a4a"></div>
<div class="a" style="left:448px;top:383px;width:1px;height:20px;background:#4a4a4a"></div>
<div class="t" style="left:58.5px;top:386.69px;font-size:11px;">IC50</div>
<div class="t" style="left:156.5px;top:386.69px;font-size:11px;letter-spacing:0.1px">6.1700</div>
<div class="t" style="left:255px;top:386.69px;font-size:11px;letter-spacing:-0.6px">H1</div>
<div class="t" style="left:352.5px;top:386.69px;font-size:11px;letter-spacing:-0.3px">human</div>
<div class="a" style="left:14px;top:403px;width:42px;height:20px;background:#efefef;border-left:1px solid #fff;border-top:1px solid #fff;border-right:1px solid #666;border-bottom:1px solid #606060;box-shadow:inset -1px -1px 0 #cfcfcf"></div>
<div class="t" style="left:-13px;width:100px;text-align:center;top:406.64px;font-size:12px;">16</div>
<div class="a" style="left:56px;top:403px;width:392px;height:20px;background:#fff"></div>
<div class="a" style="left:56px;top:422px;width:392px;height:1px;background:#4a4a4a"></div>
<div class="a" style="left:56px;top:403px;width:1px;height:20px;background:#4a4a4a"></div>
<div class="a" style="left:154px;top:403px;width:1px;height:20px;background:#4a4a4a"></div>
<div class="a" style="left:252px;top:403px;width:1px;height:20px;background:#4a4a4a"></div>
<div class="a" style="left:350px;top:403px;width:1px;height:20px;background:#4a4a4a"></div>
<div class="a" style="left:448px;top:403px;width:1px;height:20px;background:#4a4a4a"></div>
<div class="t" style="left:58.5px;top:406.69px;font-size:11px;">IC50</div>
<div class="t" style="left:156.5px;top:406.69px;font-size:11px;letter-spacing:0.1px">7.3700</div>
<div class="t" style="left:255px;top:406.69px;font-size:11px;letter-spacing:-0.6px">5-HT2A</div>
<div class="t" style="left:352.5px;top:406.69px;font-size:11px;letter-spacing:-0.3px">human</div>
<div class="a" style="left:14px;top:423px;width:42px;height:20px;background:#efefef;border-left:1px solid #fff;border-top:1px solid #fff;border-right:1px solid #666;border-bottom:1px solid #606060;box-shadow:inset -1px -1px 0 #cfcfcf"></div>
<div class="t" style="left:-13px;width:100px;text-align:center;top:426.64px;font-size:12px;">17</div>
<div class="a" style="left:56px;top:423px;width:392px;height:20px;background:#fff"></div>
<div class="a" style="left:56px;top:442px;width:392px;height:1px;background:#4a4a4a"></div>
<div class="a" style="left:56px;top:423px;width:1px;height:20px;background:#4a4a4a"></div>
<div class="a" style="left:154px;top:423px;width:1px;height:20px;background:#4a4a4a"></div>
<div class="a" style="left:252px;top:423px;width:1px;height:20px;background:#4a4a4a"></div>
<div class="a" style="left:350px;top:423px;width:1px;height:20px;background:#4a4a4a"></div>
<div class="a" style="left:448px;top:423px;width:1px;height:20px;background:#4a4a4a"></div>
<div class="t" style="left:58.5px;top:426.69px;font-size:11px;">IC50</div>
<div class="t" style="left:156.5px;top:426.69px;font-size:11px;letter-spacing:0.1px">7.8400</div>
<div class="t" style="left:255px;top:426.69px;font-size:11px;letter-spacing:-0.6px">5-HT2C</div>
<div class="t" style="left:352.5px;top:426.69px;font-size:11px;letter-spacing:-0.3px">human</div>
<div class="a" style="left:14px;top:443px;width:42px;height:20px;background:#efefef;border-left:1px solid #fff;border-top:1px solid #fff;border-right:1px solid #666;border-bottom:1px solid #606060;box-shadow:inset -1px -1px 0 #cfcfcf"></div>
<div class="t" style="left:-13px;width:100px;text-align:center;top:446.64px;font-size:12px;">18</div>
<div class="a" style="left:56px;top:443px;width:392px;height:20px;background:#fff"></div>
<div class="a" style="left:56px;top:462px;width:392px;height:1px;background:#4a4a4a"></div>
<div class="a" style="left:56px;top:443px;width:1px;height:20px;background:#4a4a4a"></div>
<div class="a" style="left:154px;top:443px;width:1px;height:20px;background:#4a4a4a"></div>
<div class="a" style="left:252px;top:443px;width:1px;height:20px;background:#4a4a4a"></div>
<div class="a" style="left:350px;top:443px;width:1px;height:20px;background:#4a4a4a"></div>
<div class="a" style="left:448px;top:443px;width:1px;height:20px;background:#4a4a4a"></div>
<div class="t" style="left:58.5px;top:446.69px;font-size:11px;">IC50</div>
<div class="t" style="left:156.5px;top:446.69px;font-size:11px;letter-spacing:0.1px">7.8700</div>
<div class="t" style="left:255px;top:446.69px;font-size:11px;letter-spacing:-0.6px">H1</div>
<div class="t" style="left:352.5px;top:446.69px;font-size:11px;letter-spacing:-0.3px">human</div>
<div class="a" style="left:14px;top:463px;width:42px;height:20px;background:#efefef;border-left:1px solid #fff;border-top:1px solid #fff;border-right:1px solid #666;border-bottom:1px solid #606060;box-shadow:inset -1px -1px 0 #cfcfcf"></div>
<div class="t" style="left:-13px;width:100px;text-align:center;top:466.64px;font-size:12px;">19</div>
<div class="a" style="left:56px;top:463px;width:392px;height:20px;background:#fff"></div>
<div class="a" style="left:56px;top:482px;width:392px;height:1px;background:#4a4a4a"></div>
<div class="a" style="left:56px;top:463px;width:1px;height:20px;background:#4a4a4a"></div>
<div class="a" style="left:154px;top:463px;width:1px;height:20px;background:#4a4a4a"></div>
<div class="a" style="left:252px;top:463px;width:1px;height:20px;background:#4a4a4a"></div>
<div class="a" style="left:350px;top:463px;width:1px;height:20px;background:#4a4a4a"></div>
<div class="a" style="left:448px;top:463px;width:1px;height:20px;background:#4a4a4a"></div>
<div class="t" style="left:58.5px;top:466.69px;font-size:11px;">IC50</div>
<div class="t" style="left:156.5px;top:466.69px;font-size:11px;letter-spacing:0.1px">&lt;6.0000</div>
<div class="t" style="left:255px;top:466.69px;font-size:11px;letter-spacing:-0.6px">5-HT2A</div>
<div class="t" style="left:352.5px;top:466.69px;font-size:11px;letter-spacing:-0.3px">human</div>
<div class="a" style="left:14px;top:483px;width:42px;height:20px;background:#efefef;border-left:1px solid #fff;border-top:1px solid #fff;border-right:1px solid #666;border-bottom:1px solid #606060;box-shadow:inset -1px -1px 0 #cfcfcf"></div>
<div class="t" style="left:-13px;width:100px;text-align:center;top:486.64px;font-size:12px;">20</div>
<div class="a" style="left:56px;top:483px;width:392px;height:20px;background:#fff"></div>
<div class="a" style="left:56px;top:502px;width:392px;height:1px;background:#4a4a4a"></div>
<div class="a" style="left:56px;top:483px;width:1px;height:20px;background:#4a4a4a"></div>
<div class="a" style="left:154px;top:483px;width:1px;height:20px;background:#4a4a4a"></div>
<div class="a" style="left:252px;top:483px;width:1px;height:20px;background:#4a4a4a"></div>
<div class="a" style="left:350px;top:483px;width:1px;height:20px;background:#4a4a4a"></div>
<div class="a" style="left:448px;top:483px;width:1px;height:20px;background:#4a4a4a"></div>
<div class="t" style="left:58.5px;top:486.69px;font-size:11px;">IC50</div>
<div class="t" style="left:156.5px;top:486.69px;font-size:11px;letter-spacing:0.1px">6.4900</div>
<div class="t" style="left:255px;top:486.69px;font-size:11px;letter-spacing:-0.6px">5-HT2C</div>
<div class="t" style="left:352.5px;top:486.69px;font-size:11px;letter-spacing:-0.3px">human</div>
<div class="a" style="left:14px;top:503px;width:42px;height:20px;background:#efefef;border-left:1px solid #fff;border-top:1px solid #fff;border-right:1px solid #666;border-bottom:1px solid #606060;box-shadow:inset -1px -1px 0 #cfcfcf"></div>
<div class="t" style="left:-13px;width:100px;text-align:center;top:506.64px;font-size:12px;">21</div>
<div class="a" style="left:56px;top:503px;width:392px;height:20px;background:#fff"></div>
<div class="a" style="left:56px;top:522px;width:392px;height:1px;background:#4a4a4a"></div>
<div class="a" style="left:56px;top:503px;width:1px;height:20px;background:#4a4a4a"></div>
<div class="a" style="left:154px;top:503px;width:1px;height:20px;background:#4a4a4a"></div>
<div class="a" style="left:252px;top:503px;width:1px;height:20px;background:#4a4a4a"></div>
<div class="a" style="left:350px;top:503px;width:1px;height:20px;background:#4a4a4a"></div>
<div class="a" style="left:448px;top:503px;width:1px;height:20px;background:#4a4a4a"></div>
<div class="t" style="left:58.5px;top:506.69px;font-size:11px;">IC50</div>
<div class="t" style="left:156.5px;top:506.69px;font-size:11px;letter-spacing:0.1px">6.8200</div>
<div class="t" style="left:255px;top:506.69px;font-size:11px;letter-spacing:-0.6px">H1</div>
<div class="t" style="left:352.5px;top:506.69px;font-size:11px;letter-spacing:-0.3px">human</div>
<div class="a" style="left:14px;top:523px;width:42px;height:20px;background:#efefef;border-left:1px solid #fff;border-top:1px solid #fff;border-right:1px solid #666;border-bottom:1px solid #606060;box-shadow:inset -1px -1px 0 #cfcfcf"></div>
<div class="t" style="left:-13px;width:100px;text-align:center;top:526.64px;font-size:12px;">22</div>
<div class="a" style="left:56px;top:523px;width:392px;height:20px;background:#fff"></div>
<div class="a" style="left:56px;top:542px;width:392px;height:1px;background:#4a4a4a"></div>
<div class="a" style="left:56px;top:523px;width:1px;height:20px;background:#4a4a4a"></div>
<div class="a" style="left:154px;top:523px;width:1px;height:20px;background:#4a4a4a"></div>
<div class="a" style="left:252px;top:523px;width:1px;height:20px;background:#4a4a4a"></div>
<div class="a" style="left:350px;top:523px;width:1px;height:20px;background:#4a4a4a"></div>
<div class="a" style="left:448px;top:523px;width:1px;height:20px;background:#4a4a4a"></div>
<div class="t" style="left:58.5px;top:526.69px;font-size:11px;">IC50</div>
<div class="t" style="left:156.5px;top:526.69px;font-size:11px;letter-spacing:0.1px">&lt;6.0000</div>
<div class="t" style="left:255px;top:526.69px;font-size:11px;letter-spacing:-0.6px">5-HT2A</div>
<div class="t" style="left:352.5px;top:526.69px;font-size:11px;letter-spacing:-0.3px">human</div>
<div class="a" style="left:14px;top:543px;width:42px;height:20px;background:#efefef;border-left:1px solid #fff;border-top:1px solid #fff;border-right:1px solid #666;border-bottom:1px solid #606060;box-shadow:inset -1px -1px 0 #cfcfcf"></div>
<div class="t" style="left:-13px;width:100px;text-align:center;top:546.64px;font-size:12px;">23</div>
<div class="a" style="left:56px;top:543px;width:392px;height:20px;background:#fff"></div>
<div class="a" style="left:56px;top:562px;width:392px;height:1px;background:#4a4a4a"></div>
<div class="a" style="left:56px;top:543px;width:1px;height:20px;background:#4a4a4a"></div>
<div class="a" style="left:154px;top:543px;width:1px;height:20px;background:#4a4a4a"></div>
<div class="a" style="left:252px;top:543px;width:1px;height:20px;background:#4a4a4a"></div>
<div class="a" style="left:350px;top:543px;width:1px;height:20px;background:#4a4a4a"></div>
<div class="a" style="left:448px;top:543px;width:1px;height:20px;background:#4a4a4a"></div>
<div class="t" style="left:58.5px;top:546.69px;font-size:11px;">IC50</div>
<div class="t" style="left:156.5px;top:546.69px;font-size:11px;letter-spacing:0.1px">6.1600</div>
<div class="t" style="left:255px;top:546.69px;font-size:11px;letter-spacing:-0.6px">5-HT2C</div>
<div class="t" style="left:352.5px;top:546.69px;font-size:11px;letter-spacing:-0.3px">human</div>
<div class="a" style="left:14px;top:563px;width:42px;height:20px;background:#efefef;border-left:1px solid #fff;border-top:1px solid #fff;border-right:1px solid #666;border-bottom:1px solid #606060;box-shadow:inset -1px -1px 0 #cfcfcf"></div>
<div class="t" style="left:-13px;width:100px;text-align:center;top:566.64px;font-size:12px;">24</div>
<div class="a" style="left:56px;top:563px;width:392px;height:20px;background:#fff"></div>
<div class="a" style="left:56px;top:582px;width:392px;height:1px;background:#4a4a4a"></div>
<div class="a" style="left:56px;top:563px;width:1px;height:20px;background:#4a4a4a"></div>
<div class="a" style="left:154px;top:563px;width:1px;height:20px;background:#4a4a4a"></div>
<div class="a" style="left:252px;top:563px;width:1px;height:20px;background:#4a4a4a"></div>
<div class="a" style="left:350px;top:563px;width:1px;height:20px;background:#4a4a4a"></div>
<div class="a" style="left:448px;top:563px;width:1px;height:20px;background:#4a4a4a"></div>
<div class="t" style="left:58.5px;top:566.69px;font-size:11px;">IC50</div>
<div class="t" style="left:156.5px;top:566.69px;font-size:11px;letter-spacing:0.1px">&lt;6.0000</div>
<div class="t" style="left:255px;top:566.69px;font-size:11px;letter-spacing:-0.6px">H1</div>
<div class="t" style="left:352.5px;top:566.69px;font-size:11px;letter-spacing:-0.3px">human</div>
<div class="a" style="left:14px;top:583px;width:42px;height:20px;background:#efefef;border-left:1px solid #fff;border-top:1px solid #fff;border-right:1px solid #666;border-bottom:1px solid #606060;box-shadow:inset -1px -1px 0 #cfcfcf"></div>
<div class="t" style="left:-13px;width:100px;text-align:center;top:586.64px;font-size:12px;">25</div>
<div class="a" style="left:56px;top:583px;width:392px;height:20px;background:#fff"></div>
<div class="a" style="left:56px;top:602px;width:392px;height:1px;background:#4a4a4a"></div>
<div class="a" style="left:56px;top:583px;width:1px;height:20px;background:#4a4a4a"></div>
<div class="a" style="left:154px;top:583px;width:1px;height:20px;background:#4a4a4a"></div>
<div class="a" style="left:252px;top:583px;width:1px;height:20px;background:#4a4a4a"></div>
<div class="a" style="left:350px;top:583px;width:1px;height:20px;background:#4a4a4a"></div>
<div class="a" style="left:448px;top:583px;width:1px;height:20px;background:#4a4a4a"></div>
<div class="t" style="left:58.5px;top:586.69px;font-size:11px;">IC50</div>
<div class="t" style="left:156.5px;top:586.69px;font-size:11px;letter-spacing:0.1px">7.8800</div>
<div class="t" style="left:255px;top:586.69px;font-size:11px;letter-spacing:-0.6px">5-HT2A</div>
<div class="t" style="left:352.5px;top:586.69px;font-size:11px;letter-spacing:-0.3px">human</div>
<div class="a" style="left:14px;top:603px;width:42px;height:18px;background:#efefef;border-left:1px solid #fff;border-top:1px solid #fff;border-right:1px solid #666;border-bottom:1px solid #606060;box-shadow:inset -1px -1px 0 #cfcfcf"></div>
<div class="t" style="left:-13px;width:100px;text-align:center;top:606.64px;font-size:12px;">26</div>
<div class="a" style="left:56px;top:603px;width:392px;height:18px;background:#fff"></div>
<div class="a" style="left:56px;top:603px;width:1px;height:18px;background:#4a4a4a"></div>
<div class="a" style="left:154px;top:603px;width:1px;height:18px;background:#4a4a4a"></div>
<div class="a" style="left:252px;top:603px;width:1px;height:18px;background:#4a4a4a"></div>
<div class="a" style="left:350px;top:603px;width:1px;height:18px;background:#4a4a4a"></div>
<div class="a" style="left:448px;top:603px;width:1px;height:18px;background:#4a4a4a"></div>
<div class="t" style="left:58.5px;top:606.69px;font-size:11px;">IC50</div>
<div class="t" style="left:156.5px;top:606.69px;font-size:11px;letter-spacing:0.1px">8.1500</div>
<div class="t" style="left:255px;top:606.69px;font-size:11px;letter-spacing:-0.6px">5-HT2C</div>
<div class="t" style="left:352.5px;top:606.69px;font-size:11px;letter-spacing:-0.3px">human</div>
<div class="a" style="left:449px;top:103px;width:21px;height:518px;background:#eeeeee;box-shadow:inset 1px 0 0 #e4e4e4"></div>
<svg class="a" style="left:455px;top:111px" width="9" height="5"><defs><linearGradient id="ga" x1="0" y1="0" x2="1" y2="0"><stop offset="0" stop-color="#111"/><stop offset="1" stop-color="#999"/></linearGradient></defs><path d="M0 5L4.5 0L9 5Z" fill="url(#ga)"/></svg>
<div class="a" style="left:451px;top:125px;width:18px;height:20px;background:linear-gradient(90deg,#f4f4f4,#e0e0e0);border:1px solid #a0a0a0;border-radius:2px"></div>
<svg class="a" style="left:454px;top:129px" width="11" height="12"><path d="M1 1.5H10M1 5.5H10M1 9.5H10" stroke="#444" stroke-width="1.2"/></svg>
<svg class="a" style="left:455px;top:608px" width="9" height="5"><defs><linearGradient id="gb" x1="0" y1="0" x2="0" y2="1"><stop offset="0" stop-color="#111"/><stop offset="1" stop-color="#aaa"/></linearGradient></defs><path d="M0 0L9 0L4.5 5Z" fill="url(#gb)"/></svg>
<div class="a" style="left:487px;top:53px;width:350px;height:235px;background:#fff;border-top:1px solid #a4a4a4;border-left:1px solid #a4a4a4;box-shadow:inset 1px 1px 0 #707070"></div>
<svg class="a" style="left:487px;top:53px" width="350" height="235" viewBox="487 53 350 235"><g stroke-width="1.35" stroke-linecap="round"><line x1="651.8" y1="79.5" x2="651.7" y2="87.5" stroke="#000"/><line x1="651.7" y1="87.5" x2="651.6" y2="95.5" stroke="#2f3c9e"/><line x1="630.1" y1="115.4" x2="638.2" y2="110.6" stroke="#000"/><line x1="638.2" y1="110.6" x2="646.3" y2="105.8" stroke="#2f3c9e"/><line x1="657.3" y1="105.8" x2="668.2" y2="112.05" stroke="#2f3c9e"/><line x1="668.2" y1="112.05" x2="679.1" y2="118.3" stroke="#000"/><line x1="679.1" y1="118.3" x2="678.8" y2="149.7" stroke="#000"/><line x1="678.8" y1="149.7" x2="668.8" y2="156.64999999999998" stroke="#000"/><line x1="668.8" y1="156.64999999999998" x2="658.8" y2="163.6" stroke="#ff1010"/><line x1="678.8" y1="149.7" x2="703.8" y2="168.2" stroke="#000"/><line x1="703.8" y1="168.2" x2="694.0" y2="197.9" stroke="#000"/><line x1="655.5" y1="175.8" x2="658.15" y2="183.0" stroke="#ff1010"/><line x1="658.15" y1="183.0" x2="660.8" y2="190.2" stroke="#2f3c9e"/><line x1="668.9" y1="197.7" x2="681.45" y2="197.8" stroke="#2f3c9e"/><line x1="681.45" y1="197.8" x2="694.0" y2="197.9" stroke="#000"/><line x1="658.1" y1="203.5" x2="650.85" y2="212.45" stroke="#2f3c9e"/><line x1="650.85" y1="212.45" x2="643.6" y2="221.4" stroke="#000"/><line x1="694.0" y1="197.9" x2="712.9" y2="221.5" stroke="#000"/><line x1="643.6" y1="221.4" x2="613.6" y2="212.6" stroke="#000"/><line x1="712.9" y1="221.5" x2="742.5" y2="212.8" stroke="#000"/><line x1="613.6" y1="212.6" x2="591.4" y2="233.6" stroke="#000"/><line x1="742.5" y1="212.8" x2="765.6" y2="233.7" stroke="#000"/><line x1="591.4" y1="233.6" x2="597.5" y2="264.2" stroke="#000"/><line x1="765.6" y1="233.7" x2="758.9" y2="264.8" stroke="#000"/><line x1="597.5" y1="264.2" x2="627.8" y2="273.6" stroke="#000"/><line x1="758.9" y1="264.8" x2="728.4" y2="273.6" stroke="#000"/><line x1="627.8" y1="273.6" x2="650.0" y2="252.1" stroke="#000"/><line x1="728.4" y1="273.6" x2="706.4" y2="252.9" stroke="#000"/><line x1="650.0" y1="252.1" x2="643.6" y2="221.4" stroke="#000"/><line x1="706.4" y1="252.9" x2="712.9" y2="221.5" stroke="#000"/><line x1="615.2" y1="219.3" x2="597.1" y2="235.9" stroke="#000"/><line x1="638.7" y1="226.9" x2="645.0" y2="249.8" stroke="#000"/><line x1="603.4" y1="259.5" x2="626.2" y2="267.1" stroke="#000"/><line x1="717.8" y1="226.5" x2="711.5" y2="250.4" stroke="#000"/><line x1="741.5" y1="219.6" x2="759.4" y2="235.3" stroke="#000"/><line x1="753.7" y1="259.9" x2="730.4" y2="267.0" stroke="#000"/><line x1="591.4" y1="233.6" x2="579.7" y2="230.25" stroke="#000"/><line x1="579.7" y1="230.25" x2="568.0" y2="226.9" stroke="#1a9a1a"/><line x1="650.0" y1="252.1" x2="661.0" y2="257.5" stroke="#000"/><line x1="661.0" y1="257.5" x2="672.0" y2="262.9" stroke="#ff1010"/><line x1="684.5" y1="263.0" x2="695.45" y2="257.95" stroke="#ff1010"/><line x1="695.45" y1="257.95" x2="706.4" y2="252.9" stroke="#000"/></g><g style="font-family:'Liberation Sans',sans-serif"><text transform="translate(647.0,75.8) scale(0.88,1)" font-size="12" fill="#000">C</text><text transform="translate(656.3,75.8) scale(0.88,1)" font-size="12" fill="#000">H</text><text transform="translate(664.6,79.2) scale(0.88,1)" font-size="8" fill="#000">3</text><text transform="translate(607.2,123) scale(0.88,1)" font-size="12" fill="#000">H</text><text transform="translate(615.5,126) scale(0.88,1)" font-size="8" fill="#000">3</text><text transform="translate(620.2,123) scale(0.88,1)" font-size="12" fill="#000">C</text><text transform="translate(647.0,107.6) scale(0.88,1)" font-size="12" fill="#2f3c9e">N</text><text transform="translate(649.4,172.8) scale(0.88,1)" font-size="12" fill="#ff1010">O</text><text transform="translate(658.2,202.7) scale(0.88,1)" font-size="12" fill="#2f3c9e">N</text><text transform="translate(674.4,270.5) scale(0.88,1)" font-size="12" fill="#ff1010">O</text><text transform="translate(554.8,229.8) scale(0.88,1)" font-size="12" fill="#1a9a1a">Cl</text></g></svg>
<div class="a" style="left:490px;top:305px;width:164px;height:41px;border:1px solid #f4f8fc;border-radius:2px"></div>
<div class="a" style="left:493px;top:301px;width:28px;height:8px;background:#dfdfdf"></div>
<div class="t" style="left:495.5px;top:300.19px;font-size:11px;letter-spacing:0px">CdId</div>
<div class="a" style="left:493px;top:314px;width:157px;height:26px;background:#fff;border:1px solid #a4a4a4"></div>
<div class="t" style="right:361.5px;top:318.19px;font-size:11px;">1</div>
<div class="a" style="left:670px;top:305px;width:164px;height:41px;border:1px solid #f4f8fc;border-radius:2px"></div>
<div class="a" style="left:673px;top:301px;width:52px;height:8px;background:#dfdfdf"></div>
<div class="t" style="left:675.0px;top:300.19px;font-size:11px;letter-spacing:-0.5px">SMDL.IDX</div>
<div class="a" style="left:673px;top:314px;width:157px;height:26px;background:#fff;border:1px solid #a4a4a4"></div>
<div class="t" style="left:675px;top:318.19px;font-size:11px;letter-spacing:-0.45px">SMDL-00000470</div>
<div class="a" style="left:490px;top:365px;width:164px;height:41px;border:1px solid #f4f8fc;border-radius:2px"></div>
<div class="a" style="left:493px;top:361px;width:62px;height:8px;background:#dfdfdf"></div>
<div class="t" style="left:495.5px;top:360.19px;font-size:11px;letter-spacing:0px">Mol Weight</div>
<div class="a" style="left:493px;top:374px;width:157px;height:26px;background:#fff;border:1px solid #a4a4a4"></div>
<div class="t" style="right:361.5px;top:378.19px;font-size:11px;">330,81</div>
<div class="a" style="left:670px;top:365px;width:164px;height:41px;border:1px solid #f4f8fc;border-radius:2px"></div>
<div class="a" style="left:673px;top:361px;width:45px;height:8px;background:#dfdfdf"></div>
<div class="t" style="left:674.0px;top:360.19px;font-size:11px;letter-spacing:0px">Formula</div>
<div class="a" style="left:673px;top:374px;width:157px;height:26px;background:#fff;border:1px solid #a4a4a4"></div>
<div class="t" style="left:675px;top:378.19px;font-size:11px;letter-spacing:-0.45px">C18H19ClN2O2</div>
<div class="a" style="left:490px;top:425px;width:344px;height:82px;border:1px solid #f4f8fc;border-radius:2px"></div>
<div class="a" style="left:493px;top:421px;width:48px;height:8px;background:#dfdfdf"></div>
<div class="t" style="left:495.5px;top:420.19px;font-size:11px;letter-spacing:-0.5px">MOL.REF</div>
<div class="a" style="left:493px;top:434px;width:338px;height:68px;background:#fff;border:1px solid #a4a4a4"></div>
<div class="t" style="left:496.5px;top:439.69px;font-size:11px;letter-spacing:0px">Bioorg. Med. Chem. Lett. 12(2)-2002 243-248</div>
<div class="a" style="left:490px;top:526px;width:344px;height:41px;border:1px solid #f4f8fc;border-radius:2px"></div>
<div class="a" style="left:493px;top:522px;width:62px;height:8px;background:#dfdfdf"></div>
<div class="t" style="left:495.5px;top:521.19px;font-size:11px;letter-spacing:-0.5px">BIO.EFFECT</div>
<div class="a" style="left:493px;top:536px;width:337px;height:25px;background:#fff;border:1px solid #a4a4a4"></div>
<div class="t" style="left:495px;top:539.19px;font-size:11px;letter-spacing:0px">antagonist</div>
<div class="a" style="left:490px;top:586px;width:344px;height:40px;border:1px solid #f4f8fc;border-radius:2px"></div>
<div class="a" style="left:493px;top:582px;width:100px;height:8px;background:#dfdfdf"></div>
<div class="t" style="left:495.5px;top:581.19px;font-size:11px;letter-spacing:-0.5px">BIND.RADIOLIGAND</div>
<div class="a" style="left:493px;top:595px;width:337px;height:26px;background:#fff;border:1px solid #a4a4a4"></div>
<div class="t" style="left:495px;top:599.19px;font-size:11px;letter-spacing:0px">[125I]R-91150</div>
</body></html>
